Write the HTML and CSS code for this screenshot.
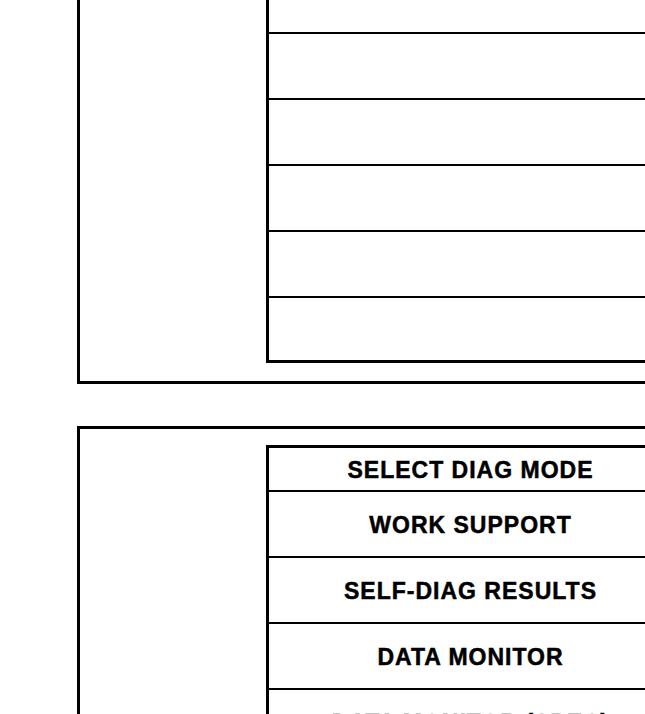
FILE: index.html
```html
<!DOCTYPE html>
<html lang="en">
<head>
    <meta charset="UTF-8">
    <meta name="viewport" content="width=device-width, initial-scale=1.0">
    <title>Diagnosis Screens</title>
    <link rel="stylesheet" href="styles.css">
</head>
<body>

    <div class="sheet">
        <!-- blank screen -->
        <div class="screen">
            <div class="menu">
                <div class="menu-head"></div>
                <div class="menu-item"></div>
                <div class="menu-item"></div>
                <div class="menu-item"></div>
                <div class="menu-item"></div>
                <div class="menu-item"></div>
            </div>
        </div>

        <!-- mode select screen -->
        <div class="screen">
            <div class="menu">
                <div class="menu-head">SELECT DIAG MODE</div>
                <div class="menu-item">WORK SUPPORT</div>
                <div class="menu-item">SELF-DIAG RESULTS</div>
                <div class="menu-item">DATA MONITOR</div>
                <div class="menu-item">DATA MONITOR (SPEC)</div>
                <div class="menu-item">ACTIVE TEST</div>
            </div>
        </div>
    </div>

</body>
</html>
```

FILE: styles.css
```css
html, body {
    margin: 0;
    height: 100%;
    overflow: hidden;
    background-color: #fff;
}
body {
    font-family: "Liberation Sans", Arial, sans-serif;
    color: #000;
}
.sheet {
    display: flex;
    flex-direction: column;
    gap: 42px;
    margin-top: -32px;
    padding-left: 77px;
}
.screen {
    width: 700px;
    border: 3px solid #000;
    padding: 16px 0 18px 186px;
}
.menu {
    width: 403px;
    border: 3px solid #000;
    border-right-width: 0;
}
.menu-head,
.menu-item {
    display: flex;
    align-items: center;
    justify-content: center;
    border-bottom: 2px solid #000;
    font-size: 23px;
    font-weight: bold;
    letter-spacing: 1px;
    -webkit-text-stroke: 0.5px #000;
}
.menu-head {
    height: 40px;
    padding-top: 2px;
}
.menu-item {
    height: 62px;
    padding-top: 2px;
}
.menu-item:last-child {
    height: 60px;
    border-bottom: 0;
}
```
